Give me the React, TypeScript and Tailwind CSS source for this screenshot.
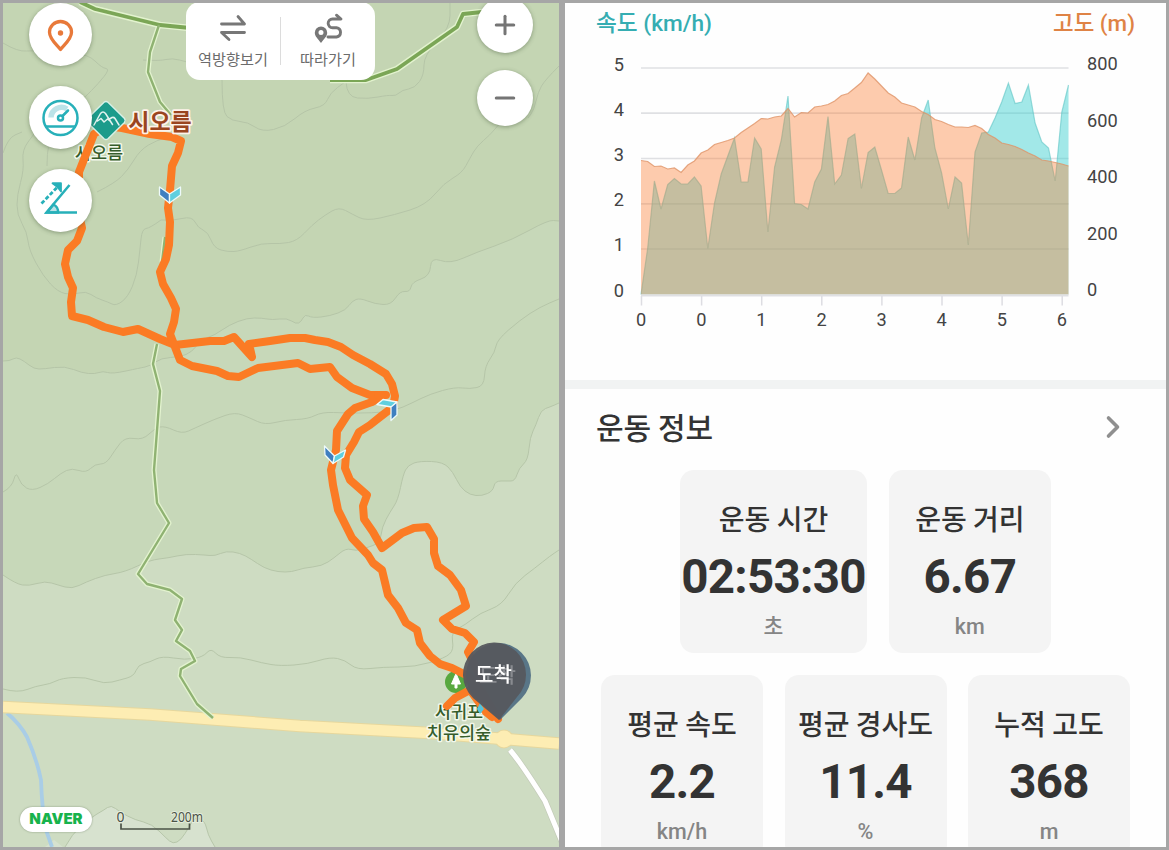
import { ChevronRight, Minus, Plus } from 'lucide-react';
import { clsx } from 'clsx';

interface Stat {
  label: string;
  value: string;
  unit: string;
}

type Point = [number, number];

const topStats: Stat[] = [
  { label: '운동 시간', value: '02:53:30', unit: '초' },
  { label: '운동 거리', value: '6.67', unit: 'km' },
];

const bottomStats: Stat[] = [
  { label: '평균 속도', value: '2.2', unit: 'km/h' },
  { label: '평균 경사도', value: '11.4', unit: '%' },
  { label: '누적 고도', value: '368', unit: 'm' },
];

// Chart samples, already scaled to the vertical axis of the plot
const speedSamples = [
  294.5, 248, 181, 209, 184.5, 178.5, 184, 184, 177, 186, 248.5, 203, 174, 156, 138, 182, 182, 138, 149, 232, 167,
  140, 96, 203.5, 204.5, 209, 182, 169, 116.5, 184, 175, 138.5, 134, 188.5, 152.5, 147, 170, 193.5, 193.5, 188,
  137, 160, 118, 100, 148, 173, 209, 177, 183, 245, 152, 133, 132, 118, 102, 83, 103.5, 102, 85, 123, 142, 148,
  181, 112, 85,
];

const altitudeSamples = [
  160.5, 161.5, 166.5, 166, 169, 168, 172.5, 165, 161, 153, 150, 144.5, 142.5, 140.5, 138, 132.5, 128, 123.5,
  118.5, 119, 117, 116, 108.5, 117, 112.5, 113, 107, 106, 104.5, 101, 95.5, 93.5, 88, 82.5, 73, 79, 86, 93, 97,
  103, 105, 107, 111.5, 114.5, 119.5, 121.5, 124.5, 127, 127, 127.5, 125.5, 128.5, 134.5, 138, 143, 144.5, 146.5,
  149.5, 153, 156, 160, 161, 162.5, 164, 166,
];

const CHART_LEFT = 641;
const CHART_RIGHT = 1068.5;
const CHART_BOTTOM = 294.5;
const STEP = 6.68;

const toLine = (samples: number[]) =>
  samples.map((y, i) => `${(CHART_LEFT + i * STEP).toFixed(1)},${y}`).join(' ');

const toArea = (samples: number[]) =>
  `${CHART_LEFT},${CHART_BOTTOM} ${toLine(samples)} ${CHART_RIGHT},${CHART_BOTTOM}`;

// Smooth a list of points with quadratic segments through the midpoints
const toCurve = (points: Point[]) => {
  let d = `M${points[0][0]} ${points[0][1]}`;
  for (let i = 1; i < points.length - 1; i++) {
    const [x, y] = points[i];
    const [nx, ny] = points[i + 1];
    d += ` Q${x} ${y} ${(x + nx) / 2} ${(y + ny) / 2}`;
  }
  const last = points[points.length - 1];
  return `${d} L${last[0]} ${last[1]}`;
};

const midBoundary: Point[] = [
  [3, 361], [10, 361], [16, 357], [24, 361], [34, 369], [44, 369], [65, 366], [82, 373], [95, 374], [103, 371],
  [112, 374], [140, 368], [150, 366], [161, 358], [180, 357], [192, 352], [201, 340], [215, 335], [229, 325],
  [247, 318], [262, 318], [272, 320], [287, 318], [296, 324], [301, 322], [305, 314], [312, 318], [330, 316],
  [346, 310], [352, 301], [360, 298], [375, 304], [391, 305], [400, 291], [410, 292], [412, 282], [430, 276],
  [431, 257], [450, 264], [477, 252], [512, 240], [548, 220], [559, 221],
];

const lowBoundary: Point[] = [
  [3, 575], [16, 584], [29, 586], [45, 581], [58, 585], [72, 589], [86, 582], [105, 575], [125, 572], [150, 560],
  [168, 558], [186, 554], [205, 555], [215, 556], [226, 551], [240, 553], [251, 559], [264, 568], [278, 572],
  [292, 572], [303, 568], [322, 566], [334, 558], [346, 548], [356, 551], [366, 548], [380, 543], [382, 527],
  [390, 512], [398, 500], [403, 475], [408, 465], [420, 461], [443, 462], [453, 472], [460, 487], [470, 495],
  [482, 496], [493, 491], [495, 481], [507, 481], [515, 481], [519, 468], [528, 460], [530, 437], [536, 425],
  [541, 410], [550, 407], [559, 403],
];

const contourLines: Point[][] = [
  [
    [3, 492], [12, 487], [16, 471], [21, 485], [32, 491], [48, 484], [61, 473], [72, 468], [86, 473], [95, 464],
    [106, 464], [115, 450], [125, 437], [143, 440], [155, 428], [165, 426], [182, 434], [195, 428], [215, 419],
    [235, 412], [250, 418], [265, 425], [285, 420], [308, 419], [322, 412], [345, 413], [372, 413], [394, 411],
    [412, 403], [430, 394], [455, 387], [470, 389], [484, 386], [485, 366], [495, 352], [497, 340], [520, 320],
    [540, 307], [559, 299],
  ],
  [
    [161, 220], [172, 221], [192, 216], [198, 228], [208, 232], [214, 248], [228, 252], [240, 251], [262, 243],
    [280, 244], [297, 241], [312, 225], [325, 215], [339, 207], [352, 214], [366, 221], [394, 215], [426, 205],
    [444, 183], [462, 173], [470, 158], [477, 146], [490, 135], [500, 123],
  ],
  [
    [161, 220], [150, 228], [142, 229], [140, 249], [137, 275], [128, 297], [116, 306], [108, 302], [96, 298],
    [86, 291], [72, 295], [58, 292], [43, 276], [29, 250], [27, 232], [17, 215], [17, 195], [24, 170], [22, 150],
    [34, 134],
  ],
  [[222, 80], [222, 112], [232, 121], [248, 122], [262, 132], [285, 127], [305, 110], [325, 106], [330, 93], [345, 82]],
  [[346, 82], [347, 97], [368, 99], [388, 95], [396, 96], [402, 90], [415, 88], [424, 75], [424, 55], [450, 28], [450, 3]],
  [[3, 43], [18, 52], [35, 50], [60, 54], [88, 54], [102, 68], [110, 69], [98, 84], [85, 97]],
  [[97, 192], [115, 183], [128, 170], [140, 150], [157, 140], [174, 136]],
  [[143, 60], [160, 61], [172, 58], [187, 62]],
  [[47, 166], [47, 140], [60, 133], [76, 128]],
  [[3, 153], [8, 138], [22, 132]],
  [[559, 66], [545, 80], [538, 92], [534, 110], [528, 118]],
  [
    [3, 689], [18, 693], [36, 686], [50, 684], [62, 678], [86, 677], [104, 684], [120, 680], [134, 676], [138, 665],
    [150, 662], [162, 656], [185, 660], [203, 657], [211, 648], [220, 658], [240, 657], [262, 663], [280, 666],
    [308, 664], [330, 657], [345, 660], [357, 670], [383, 667], [415, 667], [445, 658], [454, 650], [451, 632],
    [465, 625], [480, 613], [502, 605], [515, 583], [535, 568], [550, 556], [559, 550],
  ],
];

const patch: Point[] = [
  [65, 847], [72, 834], [90, 818], [104, 810], [111, 805], [120, 812], [135, 820], [152, 824], [166, 838],
  [173, 844], [181, 840], [189, 827], [195, 817], [205, 821], [208, 835], [215, 847],
];

const outerRoute =
  'M100 130 L94 134 L79 172 L79 215 L82 228 L77 241 L68 250 L65 264 L68 277 L73 288 L71 302 L72 316 L88 320 L104 327 L123 332 L138 329 L160 339 L175 345 L210 341 L224 341 L234 337 L252 357 L249 344 L270 341 L290 338 L305 338 L315 340 L328 342 L341 347 L353 355 L370 364 L386 374 L392 384 L395 396 L393 407 L380 417 L370 425 L359 432 L354 442 L346 455 L345 468 L350 480 L367 495 L363 506 L364 519 L373 532 L382 548 L402 533 L414 528 L427 527 L434 539 L434 553 L438 566 L450 575 L461 590 L466 606 L443 620 L452 629 L465 633 L474 642 L468 652 L482 680';

const innerRoute =
  'M106 126 L122 128 L150 134 L172 137 L181 141 L178 153 L172 166 L170 190 L168 208 L170 222 L169 245 L166 259 L160 272 L163 284 L171 298 L176 309 L174 322 L170 334 L180 360 L192 366 L217 371 L228 376 L239 377 L258 368 L298 363 L310 369 L330 367 L337 377 L352 388 L370 395 L384 395 L372 402 L355 408 L348 414 L337 431 L336 450 L331 470 L333 485 L338 510 L347 528 L352 538 L368 555 L373 563 L382 570 L388 595 L398 608 L406 623 L417 630 L420 643 L430 656 L440 664 L452 668 L468 676 L482 692 L498 719';

const axisLabels = [5, 4, 3, 2, 1, 0];
const altitudeLabels = [800, 600, 400, 200, 0];
const distanceLabels = [0, 0, 1, 2, 3, 4, 5, 6];

function ReverseIcon() {
  return (
    <svg width="30" height="30" viewBox="218 13 30 30" fill="none" stroke="#777" strokeWidth="2.800" strokeLinecap="round" strokeLinejoin="round">
      <path d="M221.500 24H244.500L238 16.500" />
      <path d="M244.500 32.500H221.500L229 39.500" />
    </svg>
  );
}

function FollowIcon() {
  return (
    <svg width="32" height="30" viewBox="312 13 32 30" fill="none" stroke="#777" strokeWidth="2.900" strokeLinecap="round" strokeLinejoin="round">
      <path d="M328 37H336.500A4.700 4.700 0 0 0 336.500 27.700H332.500A4.300 4.300 0 0 1 332.500 19H341L336.500 15.200" />
      <path fillRule="evenodd" fill="#777" stroke="none" d="M321 26.500a6.200 6.200 0 0 1 6.200 6.200c0 3.500-3 6-6.200 10.200c-3.200-4.200-6.200-6.700-6.200-10.200a6.200 6.200 0 0 1 6.200-6.200zM321 30a2.500 2.500 0 1 0 0 5a2.500 2.500 0 0 0 0-5z" />
    </svg>
  );
}

function PlaceIcon() {
  return (
    <svg width="63" height="63" viewBox="0 0 63 63" fill="none">
      <path d="M31.500 46.500C27 41 20.500 36 20.500 29.300a11 10.800 0 0 1 22 0C42.500 36 36 41 31.500 46.500z" stroke="#e8793a" strokeWidth="3.300" strokeLinejoin="round" />
      <circle cx="31.500" cy="30" r="2.700" fill="#e8793a" />
    </svg>
  );
}

function SpeedIcon() {
  return (
    <svg width="63" height="63" viewBox="0 0 63 63" fill="none" stroke="#27b0b9" strokeWidth="2.500" strokeLinecap="round">
      <path d="M22 31.500A10.500 10.500 0 0 1 38 23" stroke="#bce3e8" strokeWidth="5.500" strokeLinecap="butt" />
      <circle cx="31.500" cy="32" r="17" />
      <path d="M17.500 40.500H45.500M33.500 30L39 24.500" />
      <circle cx="31.500" cy="32" r="2.500" />
    </svg>
  );
}

function SlopeIcon() {
  return (
    <svg width="63" height="63" viewBox="0 0 63 63" fill="none" stroke="#27b0b9" strokeWidth="2.500">
      <path d="M24.500 35.500Q29.500 38 29 43.500H18z" fill="#bce3e8" />
      <path d="M40.500 16L17.500 43.500H48" />
      <path d="M12.500 34.500L29 17.500" strokeDasharray="4 2" strokeWidth="2.800" />
      <path d="M23.500 14.200H32V22.500L28.500 18z" fill="#27b0b9" strokeWidth="1.800" strokeLinejoin="round" />
    </svg>
  );
}

function TrailMap() {
  const midCurve = toCurve(midBoundary);
  const lowCurve = toCurve(lowBoundary);

  return (
    <svg className="block" width="556" height="844" viewBox="3 3 556 844">
      <rect x="3" y="3" width="556" height="844" fill="#c4d5b3" />
      <path d={`${midCurve} V847 H3 Z`} fill="#c7d8b9" />
      <path d={`${lowCurve} V847 H3 Z`} fill="#cedcc2" />
      <path d={`${toCurve(patch)} Z`} fill="#d7e2cf" />
      <path d="M45 847L54 840L63 847z" fill="#d7e2cf" />

      <g fill="none" stroke="#b3c3a6" strokeWidth="0.900">
        <path d={midCurve} />
        <path d={lowCurve} />
        <path d={toCurve(patch)} />
        {contourLines.map((line, i) => (
          <path key={i} d={toCurve(line)} />
        ))}
      </g>

      {/* River */}
      <path d="M7 713Q20 724 27 737Q37 760 41 780Q42 810 46 830L52 847" fill="none" stroke="#a9cde6" strokeWidth="3.800" />

      {/* Roads */}
      <path d="M3 707L150 714.500L300 726L430 733L559 743.500" fill="none" stroke="#e6d79d" strokeWidth="12.500" />
      <circle cx="504" cy="739" r="9.500" fill="#e6d79d" />
      <path d="M510 750Q522 764 545 801L562 842" fill="none" stroke="#c4ccba" strokeWidth="6.500" />
      <path d="M510 750Q522 764 545 801L562 842" fill="none" stroke="#fff" strokeWidth="5" />
      <path d="M3 707L150 714.500L300 726L430 733L559 743.500" fill="none" stroke="#fdedb3" strokeWidth="10.500" />
      <circle cx="504" cy="739" r="8.500" fill="#fdedb3" />

      {/* Forest paths */}
      <g fill="none" strokeLinejoin="round">
        <path d="M80 2L95 9L160 25L190 28M330 80H366L397 69L457 27L463 14L482 12" stroke="#e3f3cf" strokeWidth="6.500" />
        <path d="M159 25L150 52L148 72L160 102L171 115M165 237L162 262M157 344L153 364L160 391L154 470L157 503L169 523L138 574L147 584L170 590L182 599L175 620L182 630L176 641L190 651L195 661L181 669L180 676L197 704L213 718" stroke="#e3f3cf" strokeWidth="5" />
        <path d="M80 2L95 9L160 25L190 28M330 80H366L397 69L457 27L463 14L482 12" stroke="#7ba656" strokeWidth="3.800" />
        <path d="M159 25L150 52L148 72L160 102L171 115M165 237L162 262M157 344L153 364L160 391L154 470L157 503L169 523L138 574L147 584L170 590L182 599L175 620L182 630L176 641L190 651L195 661L181 669L180 676L197 704L213 718" stroke="#8fb272" strokeWidth="2.400" />
      </g>

      {/* Place names below the route */}
      <circle cx="456" cy="682" r="11" fill="#58a83f" />
      <path d="M456 673.500L460.500 684H457V688H455V684H451.500z" fill="#fff" stroke="#fff" />
      <g className="font-['Noto_Sans_CJK_KR',sans-serif] font-medium" fill="#365d2b" stroke="#f2f8ec" strokeWidth="3" strokeLinejoin="round" style={{ paintOrder: 'stroke' }} textAnchor="middle" fontSize="17.500">
        <text x="99" y="158.500">시오름</text>
        <text>
          <tspan x="459" y="718">서귀포</tspan>
          <tspan x="459" y="739">치유의숲</tspan>
        </text>
      </g>

      {/* Recorded route */}
      <g fill="none" stroke="#fb7b24" strokeWidth="8" strokeLinejoin="round" strokeLinecap="round">
        <path d={outerRoute} />
        <path d={innerRoute} />
        <path d="M447 706L455 698L470 690L486 712L492 717" />
        <path d="M378 395H386" />
      </g>

      {/* Direction markers */}
      <g stroke="#eefafa" strokeWidth="1.300" strokeLinejoin="round">
        <path d="M159.500 187V195L169.500 203V194z" fill="#3f7fc0" />
        <path d="M180.500 187V195L169.500 203V194z" fill="#5fcfdf" />
        <path d="M324.500 446L325 455L333 463.500L334.500 456z" fill="#3f7fc0" />
        <path d="M345.500 450L343.500 457L333 463.500L334.500 456z" fill="#5fcfdf" />
        <path d="M377 404.500L383 399.500L397 402L391.500 407z" fill="#5fcfdf" />
        <path d="M397 402V415L391 420.500V407z" fill="#3f7fc0" />
      </g>

      {/* Summit marker */}
      <path d="M104 102.300Q106 100.800 108 102.300L124.500 118.500Q126 120.500 124.500 122.500L108 138.700Q106 140.200 104 138.700L87.500 122.500Q86 120.500 87.500 118.500z" fill="#1c9b8b" stroke="#d9f1e8" strokeWidth="1.400" />
      <path d="M94 125L100.500 113.500Q103 110.500 105.500 113.500L112.500 124.500M97.500 121L101 118.500L104 122L107.500 119L110 121M109.500 119L112 117.500Q114 117 115 118.500L119 125" fill="none" stroke="#e2f3ef" strokeWidth="1.500" strokeLinecap="round" strokeLinejoin="round" />
      <text className="font-['Noto_Sans_CJK_KR',sans-serif] font-bold" x="160" y="130" fontSize="23" fill="#9a4520" stroke="#fdf3ea" strokeWidth="3.500" strokeLinejoin="round" style={{ paintOrder: 'stroke' }} textAnchor="middle">
        시오름
      </text>

      {/* Finish pin */}
      <path d="M477 709L480 703L484 709L480 714z" fill="#55c4dc" />
      <path d="M500 720L474 697A32.500 32.500 0 1 1 522 698z" fill="#44647c" fillOpacity="0.850" />
      <path d="M499 720L473 698A31.500 32 0 1 1 517 697z" fill="#56585e" fillOpacity="0.950" />
      <text
        className="font-['Noto_Sans_CJK_KR',sans-serif] font-medium drop-shadow-[4px_1px_0.5px_rgba(255,255,255,0.3)]"
        x="493.500"
        y="681.500"
        fontSize="20"
        fill="#fff"
        textAnchor="middle"
      >
        도착
      </text>

      {/* Scale bar */}
      <g className="font-['Noto_Sans',sans-serif]" fontSize="14" fill="#4b5347" stroke="#e6eede" strokeWidth="2" style={{ paintOrder: 'stroke' }} textAnchor="middle">
        <text x="120.500" y="821.500">0</text>
        <text x="187" y="821.500" textLength="32" lengthAdjust="spacingAndGlyphs">200m</text>
      </g>
      <path d="M121 823.500V829H189.500V823.500" fill="none" stroke="#4b5347" strokeWidth="1.700" />
    </svg>
  );
}

function MapPanel() {
  const round = 'flex items-center justify-center rounded-full bg-white shadow-[0_1px_4px_rgba(60,80,50,0.45)]';

  return (
    <section className="relative h-full w-[556px] shrink-0 overflow-hidden">
      <TrailMap />

      {/* Controls floating over the map */}
      <div className="absolute top-0 left-[26px] flex flex-col gap-5">
        <button className={clsx(round, 'size-[63px]')}><PlaceIcon /></button>
        <button className={clsx(round, 'size-[63px]')}><SpeedIcon /></button>
        <button className={clsx(round, 'size-[63px]')}><SlopeIcon /></button>
      </div>

      <div className="absolute -top-px left-[183px] flex h-[78px] w-[189px] items-center rounded-[14px] bg-white font-['Noto_Sans_CJK_KR',sans-serif] text-[15.2px] text-[#6c6c6c]">
        <button className="-mt-px flex flex-1 flex-col items-center gap-[5px] leading-5">
          <ReverseIcon />
          역방향보기
        </button>
        <span className="h-[48px] w-px bg-[#dcdcdc]" />
        <button className="-mt-px flex flex-1 flex-col items-center gap-[5px] leading-5">
          <FollowIcon />
          따라가기
        </button>
      </div>

      <div className="absolute -top-[6px] left-[474px] flex flex-col gap-[17px] text-[#757575]">
        <button className={clsx(round, 'size-14')}><Plus size={30} strokeWidth={2.4} /></button>
        <button className={clsx(round, 'size-14')}><Minus size={30} strokeWidth={2.4} /></button>
      </div>

      <div className="absolute top-[804px] left-[17px] flex h-[25px] w-[72px] items-center justify-center rounded-full bg-white font-[Inter,sans-serif] text-[15px] font-black text-[#17b34c] shadow-[0_0_2px_rgba(60,80,50,0.5)]">
        NAVER
      </div>
    </section>
  );
}

function SpeedChart() {
  return (
    <svg className="block shrink-0 font-[Roboto,sans-serif]" width="601" height="377" viewBox="565 3 601 377" fontSize="18.200" fill="#444">
      <g stroke="#dfe0e3" strokeWidth="1.700">
        {[68, 113.2, 158.5, 203.8, 249].map((y) => (
          <line key={y} x1={CHART_LEFT} x2={CHART_RIGHT} y1={y} y2={y} />
        ))}
      </g>
      <polygon points={toArea(speedSamples)} fill="#45d1d1" fillOpacity="0.500" />
      <polyline points={toLine(speedSamples)} fill="none" stroke="#5fc5c5" strokeOpacity="0.600" strokeWidth="1.200" />
      <polygon points={toArea(altitudeSamples)} fill="#fc7c2f" fillOpacity="0.390" />
      <polyline points={toLine(altitudeSamples)} fill="none" stroke="#df9468" strokeOpacity="0.800" strokeWidth="1.200" />
      <line x1={CHART_LEFT} x2={CHART_RIGHT} y1="295.500" y2="295.500" stroke="#dfe0e3" strokeWidth="2" />
      {distanceLabels.map((value, i) => (
        <g key={i}>
          <line x1={641.500 + i * 60.1} x2={641.500 + i * 60.1} y1="296" y2="305.500" stroke="#dddde2" strokeWidth="1.500" />
          <text x={641.200 + i * 60.1} y="326" textAnchor="middle">{value}</text>
        </g>
      ))}
      {axisLabels.map((value, i) => (
        <text key={value} x="624" y={70.500 + i * 45.2} textAnchor="end">{value}</text>
      ))}
      {altitudeLabels.map((value, i) => (
        <text key={value} x="1087" y={70 + i * 56.600}>{value}</text>
      ))}
      <g className="font-[Roboto,'Noto_Sans_CJK_KR',sans-serif] font-medium" fontSize="22.500">
        <text x="596" y="30.500" fill="#35adb2" textLength="116" lengthAdjust="spacingAndGlyphs">속도 (km/h)</text>
        <text x="1053" y="30.500" fill="#df8345" textLength="82" lengthAdjust="spacingAndGlyphs">고도 (m)</text>
      </g>
    </svg>
  );
}

function StatCard({ label, value, unit }: Stat) {
  return (
    <div className="flex h-[183px] min-w-[162px] flex-col items-center rounded-[14px] bg-[#f4f4f4] pt-[28px] text-[#333]">
      <span className="font-['Noto_Sans_CJK_KR',sans-serif] text-[28px] leading-10 font-medium">{label}</span>
      <span className="mt-[11px] px-px font-[Roboto,sans-serif] text-[47.5px] leading-[56px] font-bold tracking-[-0.7px]">{value}</span>
      <span className="mt-[8px] font-[Roboto,'Noto_Sans_CJK_KR',sans-serif] text-[21.5px] leading-7 font-medium text-[#858585]">{unit}</span>
    </div>
  );
}

function WorkoutPanel() {
  return (
    <section className="flex h-full w-[601px] shrink-0 flex-col overflow-hidden bg-[#fefefe]">
      <SpeedChart />
      <div className="h-[9px] shrink-0 bg-[#f1f3f3]" />
      <header className="flex h-[81px] shrink-0 items-center justify-between pr-[35px] pb-[5px] pl-[31px]">
        <h2 className="-mt-[2px] font-['Noto_Sans_CJK_KR',sans-serif] text-[30px] leading-10 font-medium text-[#333]">운동 정보</h2>
        <ChevronRight className="text-[#8f8f8f]" size={36} strokeWidth={2.4} />
      </header>
      <div className="flex shrink-0 flex-col items-center gap-[22px]">
        <div className="flex gap-[22px]">
          {topStats.map((stat) => <StatCard key={stat.label} {...stat} />)}
        </div>
        <div className="flex gap-[21.5px]">
          {bottomStats.map((stat) => <StatCard key={stat.label} {...stat} />)}
        </div>
      </div>
    </section>
  );
}

export default function App() {
  return (
    <main className="flex h-[850px] w-[1169px] gap-[6px] overflow-hidden bg-[#a6a6a6] p-[3px]">
      <MapPanel />
      <WorkoutPanel />
    </main>
  );
}
